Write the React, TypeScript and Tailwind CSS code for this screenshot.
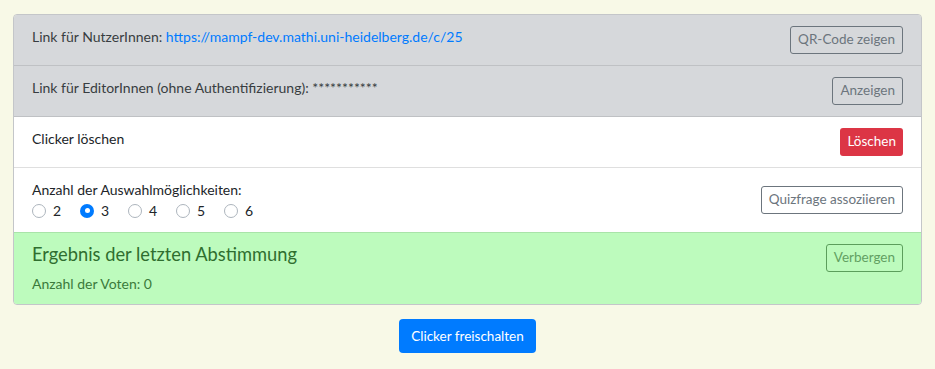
const font = { fontFamily: 'Lato, "Noto Sans", sans-serif' };

const OutlineBtn = ({ label, green }: { label: string; green?: boolean }) => (
    <button
        className={
            green
                ? "h-[28px] shrink-0 rounded-[3px] border border-[#5c9e5c] px-[7px] text-[13.5px] leading-none text-[#62a062]"
                : "h-[28px] shrink-0 rounded-[3px] border border-[#6c757d] px-[7px] text-[13.5px] leading-none text-[#6c757d]"
        }
    >
        {label}
    </button>
);

const choices = [2, 3, 4, 5, 6];

export default function App() {
    return (
        <div className="min-h-[369px] bg-[#f8f9e7] px-[13px] pt-[14px] pb-4 text-[14px] text-[#212529]" style={font}>
            <div className="overflow-hidden rounded-[4px] border border-[#c4c6c9]">
                <div className="flex items-start justify-between border-b border-[#bfc1c4] bg-[#d6d8db] px-[18px] py-[11px]">
                    <div className="leading-[21px] text-[#383d41]">
                        Link für NutzerInnen:{' '}
                        <a href="#" className="text-[#007bff]">https://mampf-dev.mathi.uni-heidelberg.de/c/25</a>
                    </div>
                    <OutlineBtn label="QR-Code zeigen" />
                </div>

                <div className="flex items-start justify-between border-b border-[#bfc1c4] bg-[#d6d8db] px-[18px] py-[11px]">
                    <div className="leading-[21px] text-[#383d41]">
                        Link für EditorInnen (ohne Authentifizierung): ***********
                    </div>
                    <OutlineBtn label="Anzeigen" />
                </div>

                <div className="flex items-start justify-between border-b border-[#dfdfdf] bg-white px-[18px] py-[11px]">
                    <div className="leading-[21px]">Clicker löschen</div>
                    <button className="h-[28px] rounded-[3px] bg-[#dc3545] px-[7px] text-[13.5px] leading-none text-white">
                        Löschen
                    </button>
                </div>

                <div className="flex items-center justify-between bg-white px-[18px] py-[11px]">
                    <div className="leading-[21px]">
                        <div>Anzahl der Auswahlmöglichkeiten:</div>
                        <div className="flex h-[21px] items-center">
                            {choices.map((c) => (
                                <label key={c} className="flex w-[48px] items-center">
                                    <span
                                        className={
                                            c === 3
                                                ? "mr-[7px] flex h-[14px] w-[14px] items-center justify-center rounded-full bg-[#007bff]"
                                                : "mr-[7px] h-[14px] w-[14px] rounded-full border border-[#adb5bd] bg-white"
                                        }
                                    >
                                        {c === 3 && <span className="h-[5px] w-[5px] rounded-full bg-white" />}
                                    </span>
                                    {c}
                                </label>
                            ))}
                        </div>
                    </div>
                    <OutlineBtn label="Quizfrage assoziieren" />
                </div>

                <div className="flex items-start justify-between border-t border-[#a9e4a9] bg-[#bdfbbd] px-[18px] pt-[11px] pb-[10px] text-[#3b7a3b]">
                    <div>
                        <div className="mb-2 text-[18.3px] leading-[21px] text-[#2f6e2f]">Ergebnis der letzten Abstimmung</div>
                        <div className="leading-[21px]">Anzahl der Voten: 0</div>
                    </div>
                    <OutlineBtn label="Verbergen" green />
                </div>
            </div>

            <div className="mt-[14px] flex justify-center">
                <button className="h-[34px] rounded-[4px] bg-[#007bff] px-3 text-[13.5px] text-white">
                    Clicker freischalten
                </button>
            </div>
        </div>
    );
}
